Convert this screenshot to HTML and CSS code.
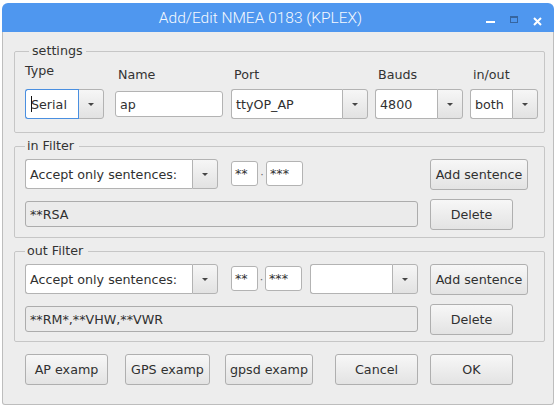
FILE: index.html
```html
<!DOCTYPE html>
<html>
<head>
<meta charset="utf-8">
<title>Add/Edit NMEA 0183 (KPLEX)</title>
<link rel="stylesheet" href="styles.css">
</head>
<body>
<div class="window">
  <div class="titlebar">
    <div class="title">Add/Edit NMEA 0183 (KPLEX)</div>
    <div class="controls">
      <span class="ctl-min"></span>
      <span class="ctl-max"></span>
      <svg class="ctl-close" width="9" height="9" viewBox="0 0 9 9"><path d="M1 1 L8 8 M8 1 L1 8" stroke="#ffffff" stroke-width="2" fill="none"/></svg>
    </div>
  </div>
  <div class="body">
    <fieldset class="group settings">
      <legend class="legend-settings">settings</legend>
      <div class="fields">
        <div class="col w-type">
          <div class="lbl lbl-type">Type</div>
          <div class="slot">
            <div class="combo w-type">
              <div class="combo-text focus"><span class="caret"></span>Serial</div>
              <div class="combo-btn"><span class="arrow"></span></div>
            </div>
          </div>
        </div>
        <div class="col w-name">
          <div class="lbl">Name</div>
          <div class="slot"><div class="input w-name">ap</div></div>
        </div>
        <div class="col w-port">
          <div class="lbl">Port</div>
          <div class="slot">
            <div class="combo w-port">
              <div class="combo-text">ttyOP_AP</div>
              <div class="combo-btn"><span class="arrow"></span></div>
            </div>
          </div>
        </div>
        <div class="col w-bauds">
          <div class="lbl">Bauds</div>
          <div class="slot">
            <div class="combo w-bauds">
              <div class="combo-text">4800</div>
              <div class="combo-btn"><span class="arrow"></span></div>
            </div>
          </div>
        </div>
        <div class="col w-inout">
          <div class="lbl">in/out</div>
          <div class="slot">
            <div class="combo w-inout">
              <div class="combo-text">both</div>
              <div class="combo-btn"><span class="arrow"></span></div>
            </div>
          </div>
        </div>
      </div>
    </fieldset>

    <fieldset class="group filter in-filter">
      <legend class="legend-filter">in Filter</legend>
      <div class="row">
        <div class="combo w-accept">
          <div class="combo-text">Accept only sentences:</div>
          <div class="combo-btn"><span class="arrow"></span></div>
        </div>
        <div class="input small w-talker">**</div>
        <span class="sep">·</span>
        <div class="input small w-sent">***</div>
        <div class="btn w-add push">Add sentence</div>
      </div>
      <div class="row row2">
        <div class="input readonly w-list">**RSA</div>
        <div class="btn w-del">Delete</div>
      </div>
    </fieldset>

    <fieldset class="group filter out-filter">
      <legend class="legend-filter">out Filter</legend>
      <div class="row">
        <div class="combo w-accept">
          <div class="combo-text">Accept only sentences:</div>
          <div class="combo-btn"><span class="arrow"></span></div>
        </div>
        <div class="input small w-talker">**</div>
        <span class="sep">·</span>
        <div class="input small w-sent">***</div>
        <div class="combo w-extra">
          <div class="combo-text"></div>
          <div class="combo-btn"><span class="arrow"></span></div>
        </div>
        <div class="btn w-add gap-add">Add sentence</div>
      </div>
      <div class="row row2">
        <div class="input readonly w-list">**RM*,**VHW,**VWR</div>
        <div class="btn w-del">Delete</div>
      </div>
    </fieldset>

    <div class="buttons">
      <div class="btn b-ap">AP examp</div>
      <div class="btn b-gps">GPS examp</div>
      <div class="btn b-gpsd">gpsd examp</div>
      <div class="btn b-cancel">Cancel</div>
      <div class="btn b-ok">OK</div>
    </div>
  </div>
</div>
</body>
</html>
```

FILE: styles.css
```css
* { box-sizing: border-box; }

body {
  margin: 0;
  background: #ffffff;
  font-family: "DejaVu Sans", sans-serif;
  font-size: 12.7px;
  color: #303030;
}

.window {
  margin: 3px 0 0 2px;
  width: 552px;
  height: 402px;
  display: flex;
  flex-direction: column;
}

.titlebar {
  height: 29px;
  flex: none;
  background: #4f97ef;
  border-radius: 6px 6px 0 0;
  display: flex;
}

.title {
  flex: 1;
  padding-left: 33px;
  padding-top: 6px;
  text-align: center;
  font-family: Roboto, sans-serif;
  font-weight: 300;
  font-size: 15.5px;
  line-height: 18px;
  color: #f6f9fe;
  white-space: nowrap;
}

.controls {
  width: 68px;
  flex: none;
  display: flex;
  align-items: flex-start;
}

.ctl-min {
  width: 9px;
  height: 2px;
  margin-top: 18px;
  background: #ffffff;
}

.ctl-max {
  width: 8px;
  height: 7px;
  margin-top: 13px;
  margin-left: 15px;
  border: 1px solid #36659f;
  border-top-width: 2px;
}

.ctl-close {
  margin-top: 14px;
  margin-left: 15px;
}

.body {
  flex: 1;
  background: #ededed;
  border: 1px solid #bdbdbd;
  border-top: none;
  border-radius: 0 0 3px 3px;
  padding: 0 8px 0 11px;
}

.group {
  margin: 0;
  min-width: 0;
  border: 1px solid #c6c6c6;
  border-radius: 2px;
}

legend {
  font-size: 12.7px;
  line-height: 16px;
  color: #333333;
}

.legend-settings {
  margin-left: 4px;
  padding: 0 3px;
}

.legend-filter {
  margin-left: 0;
  padding: 0 5px 0 2px;
}

.settings {
  margin-top: 11px;
  padding: 4px 0 13px 10px;
}

.fields {
  display: flex;
}

.col {
  display: flex;
  flex-direction: column;
}

.lbl {
  height: 16px;
  line-height: 16px;
  margin-top: 4px;
  margin-bottom: 6px;
  padding-left: 3px;
  color: #333333;
  white-space: nowrap;
}

.lbl-type {
  margin-top: 0;
  margin-bottom: 10px;
  padding-left: 0;
}

.slot {
  height: 30px;
  display: flex;
  align-items: center;
}

.w-type { width: 79px; }
.w-name { width: 108px; margin-left: 11px; }
.w-port { width: 137px; margin-left: 8px; }
.w-bauds { width: 88px; margin-left: 7px; }
.w-inout { width: 68px; margin-left: 7px; }
.slot .w-name, .slot .w-port, .slot .w-bauds, .slot .w-inout { margin-left: 0; }

.combo {
  height: 30px;
  display: flex;
  flex: none;
}

.combo-text {
  flex: 1;
  min-width: 0;
  background: #ffffff;
  border: 1px solid #b3b3b3;
  border-right: none;
  border-radius: 3px 0 0 3px;
  padding-left: 4px;
  display: flex;
  align-items: center;
  white-space: nowrap;
  overflow: hidden;
  position: relative;
}

.combo-text.focus {
  border-color: #4a8fe0;
  box-shadow: 1px 0 0 #4a8fe0;
  z-index: 1;
  padding-left: 5px;
}

.caret {
  display: inline-block;
  width: 0;
  height: 16px;
  border-left: 1px solid #111111;
  margin-right: -1px;
}

.combo-btn {
  width: 26px;
  flex: none;
  border: 1px solid #b3b3b3;
  border-radius: 0 3px 3px 0;
  background: linear-gradient(#f6f6f6, #e2e2e2);
  display: flex;
  align-items: center;
  justify-content: center;
}

.arrow {
  width: 0;
  height: 0;
  border-top: 3px solid #454545;
  border-left: 3px solid transparent;
  border-right: 3px solid transparent;
  margin-top: 1px;
}

.input {
  height: 26px;
  flex: none;
  background: #ffffff;
  border: 1px solid #b3b3b3;
  border-radius: 3px;
  padding-left: 4px;
  display: flex;
  align-items: center;
  white-space: nowrap;
}

.input.small {
  height: 25px;
  margin-top: 2px;
  padding-left: 3px;
}

.input.readonly {
  background: #ebebeb;
  border-color: #acacac;
  margin-top: 2px;
}

.filter {
  margin-top: 5px;
  padding: 5px 16px 7px 10px;
}

.out-filter {
  padding-bottom: 6px;
}

.row {
  display: flex;
  align-items: flex-start;
  height: 31px;
}

.row2 {
  margin-top: 9px;
}

.w-accept { width: 193px; }
.w-talker { width: 27px; margin-left: 13px; }
.w-sent { width: 37px; }
.w-extra { width: 108px; margin-left: 8px; }
.w-add { width: 98px; }
.push { margin-left: auto; }
.gap-add { margin-left: 12px; }
.w-list { width: 393px; }
.w-del { width: 83px; margin-left: 12px; }

.sep {
  width: 8px;
  height: 31px;
  line-height: 31px;
  text-align: center;
  color: #666666;
  font-size: 11px;
}

.btn {
  height: 31px;
  flex: none;
  border: 1px solid #afafaf;
  border-radius: 3px;
  background: linear-gradient(#f7f7f7, #e3e3e3);
  display: flex;
  align-items: center;
  justify-content: center;
  white-space: nowrap;
  color: #303030;
}

.buttons {
  display: flex;
  margin-top: 12px;
  padding-left: 11px;
}

.b-ap { width: 83px; }
.b-gps { width: 85px; margin-left: 17px; }
.b-gpsd { width: 88px; margin-left: 15px; }
.b-cancel { width: 83px; margin-left: 22px; }
.b-ok { width: 83px; margin-left: 12px; }
```
